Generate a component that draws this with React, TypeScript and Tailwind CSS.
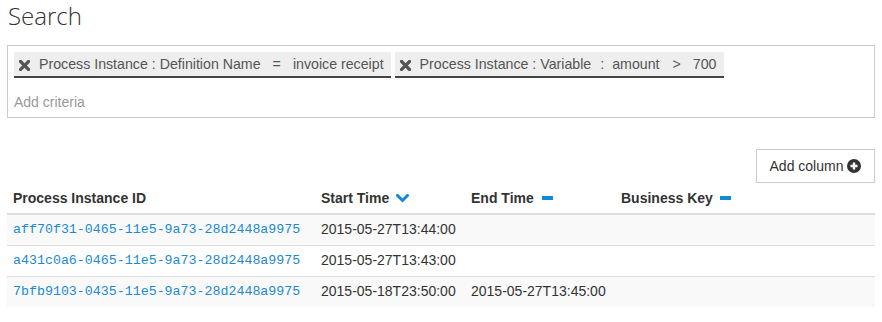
import React from "react"

function TimesIcon() {
    return (
        <svg width="11" height="11" viewBox="0 0 11 11" className="shrink-0">
            <path d="M1.5 1.5 L9.5 9.5 M9.5 1.5 L1.5 9.5" stroke="#555" strokeWidth="3.2" strokeLinecap="square" />
        </svg>
    )
}

function ChevronDown() {
    return (
        <svg width="13" height="9" viewBox="0 0 13 9" className="inline-block">
            <path d="M1.5 1.5 L6.5 6.5 L11.5 1.5" stroke="#0d8bd6" strokeWidth="3" fill="none" strokeLinecap="square" />
        </svg>
    )
}

function Minus() {
    return <span className="inline-block h-[4px] w-[11px] bg-[#0d8bd6] align-middle" />
}

function PlusCircle() {
    return (
        <svg width="14" height="14" viewBox="0 0 14 14" className="inline-block">
            <circle cx="7" cy="7" r="7" fill="#333" />
            <path d="M7 3.5 V10.5 M3.5 7 H10.5" stroke="#fff" strokeWidth="2.4" />
        </svg>
    )
}

// each part: [text, left spacing class]
function Pill({ parts }: { parts: [string, string][] }) {
    return (
        <div className="flex h-[26px] items-center border-b-2 border-[#444] bg-[#eee] pl-[5px] pr-[7px] pt-[2px] text-[14.2px] text-[#555]">
            <TimesIcon />
            {parts.map(([text, ml], i) => (
                <span key={i} className={ml}>
                    {text}
                </span>
            ))}
        </div>
    )
}

const rows = [
    { id: "aff70f31-0465-11e5-9a73-28d2448a9975", start: "2015-05-27T13:44:00", end: "" },
    { id: "a431c0a6-0465-11e5-9a73-28d2448a9975", start: "2015-05-27T13:43:00", end: "" },
    { id: "7bfb9103-0435-11e5-9a73-28d2448a9975", start: "2015-05-18T23:50:00", end: "2015-05-27T13:45:00" },
]

export default function App() {
    return (
        <div className="h-[322px] bg-white px-[7px] font-['Liberation_Sans',Arial,sans-serif] text-[#333]">
            <h1 className="pl-[1px] font-['Open_Sans',sans-serif] text-[24px] font-light leading-[32px] text-[#333]">
                Search
            </h1>

            <div className="mt-[13px] h-[73px] border border-[#ccc] px-[6px] pt-[6px]">
                <div className="flex gap-[4px]">
                    <Pill
                        parts={[
                            ["Process Instance : Definition Name", "ml-[9px]"],
                            ["=", "ml-[12px]"],
                            ["invoice receipt", "ml-[12px]"],
                        ]}
                    />
                    <Pill
                        parts={[
                            ["Process Instance : Variable", "ml-[9px]"],
                            [":", "ml-[9px]"],
                            ["amount", "ml-[8px]"],
                            [">", "ml-[13px]"],
                            ["700", "ml-[12px]"],
                        ]}
                    />
                </div>
                <div className="mt-[14px] text-[14px] leading-[20px] text-[#999]">Add criteria</div>
            </div>

            <div className="mt-[31px] flex justify-end">
                <button className="flex h-[34px] w-[119px] items-center justify-center gap-[4px] border border-[#ccc] bg-white text-[14px] text-[#333]">
                    Add column <PlusCircle />
                </button>
            </div>

            <table className="w-full border-collapse text-[14px]">
                <thead>
                    <tr className="h-[31px] border-b-2 border-[#ddd] text-left font-bold">
                        <th className="w-[308px] px-[6px]">Process Instance ID</th>
                        <th className="w-[150px] px-[6px]">
                            <span className="flex items-center gap-[7px]">
                                Start Time <ChevronDown />
                            </span>
                        </th>
                        <th className="w-[150px] px-[6px]">
                            <span className="flex items-center gap-[8px]">
                                End Time <Minus />
                            </span>
                        </th>
                        <th className="px-[6px]">
                            <span className="flex items-center gap-[7px]">
                                Business Key <Minus />
                            </span>
                        </th>
                    </tr>
                </thead>
                <tbody>
                    {rows.map((r, i) => (
                        <tr key={r.id} className={`h-[31px] ${i < rows.length - 1 ? "border-b border-[#ddd]" : ""} ${i % 2 === 0 ? "bg-[#f9f9f9]" : "bg-white"}`}>
                            <td className="px-[6px] font-['Liberation_Mono','Courier_New',monospace] text-[13.3px] text-[#1a8ad4]">
                                {r.id}
                            </td>
                            <td className="px-[6px]">{r.start}</td>
                            <td className="px-[6px]">{r.end}</td>
                            <td className="px-[6px]"></td>
                        </tr>
                    ))}
                </tbody>
            </table>
        </div>
    )
}
